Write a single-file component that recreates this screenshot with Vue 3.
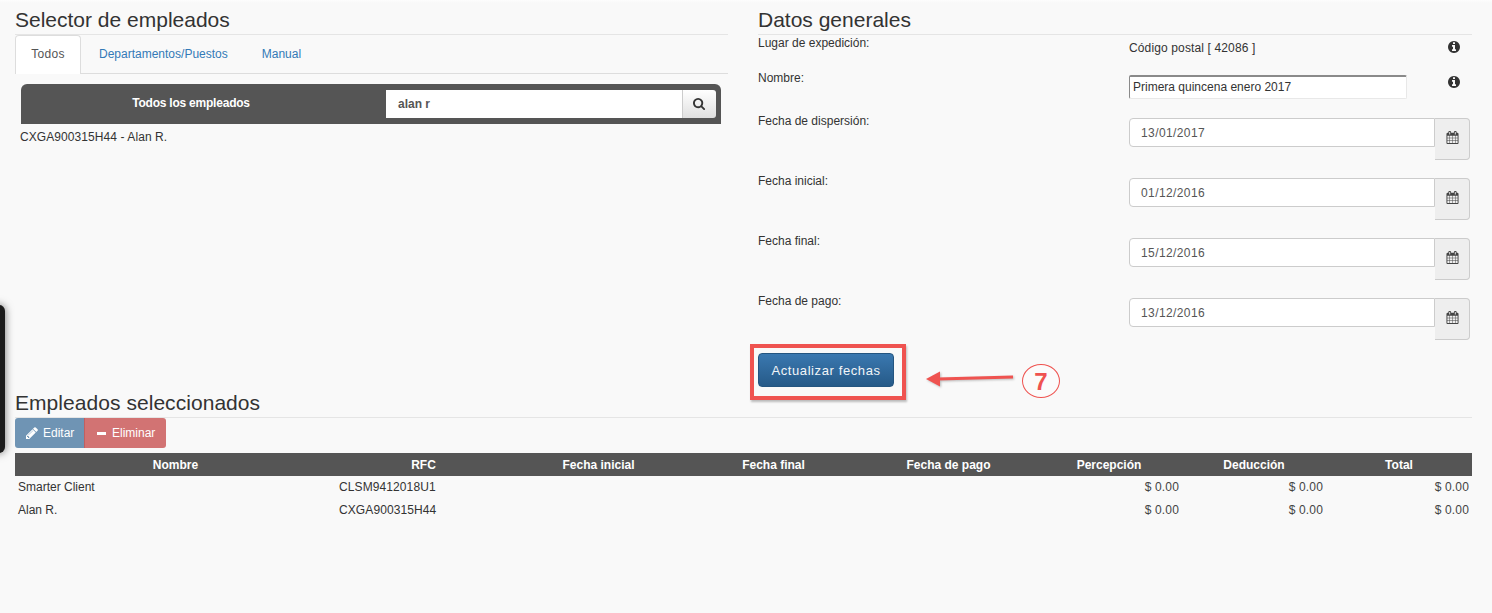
<script setup>
const dates = [
  { label: 'Fecha de dispersión:', value: '13/01/2017' },
  { label: 'Fecha inicial:', value: '01/12/2016' },
  { label: 'Fecha final:', value: '15/12/2016' },
  { label: 'Fecha de pago:', value: '13/12/2016' }
]
const heads = ['Nombre', 'RFC', 'Fecha inicial', 'Fecha final', 'Fecha de pago', 'Percepción', 'Deducción', 'Total']
const widths = [321, 175, 175, 175, 175, 146, 144, 146]
const rows = [
  { name: 'Smarter Client', rfc: 'CLSM9412018U1' },
  { name: 'Alan R.', rfc: 'CXGA900315H44' }
]
const infoPath = 'M1152 1376v-160q0-14-9-23t-23-9h-96v-512q0-14-9-23t-23-9h-320q-14 0-23 9t-9 23v160q0 14 9 23t23 9h96v320h-96q-14 0-23 9t-9 23v160q0 14 9 23t23 9h448q14 0 23-9t9-23zm-128-896v-160q0-14-9-23t-23-9h-192q-14 0-23 9t-9 23v160q0 14 9 23t23 9h192q14 0 23-9t9-23zm640 416q0 209-103 385.5t-279.5 279.5-385.5 103-385.5-103-279.5-279.5-103-385.5 103-385.5 279.5-279.5 385.5-103 385.5 103 279.5 279.5 103 385.5z'
const calPath = 'M192 1664h288v-288h-288v288zm352 0h320v-288h-320v288zm-352-352h288v-320h-288v320zm352 0h320v-320h-320v320zm-352-384h288v-288h-288v288zm736 736h320v-288h-320v288zm-384-736h320v-288h-320v288zm768 736h288v-288h-288v288zm-384-352h320v-320h-320v320zm-352-864v-288q0-13-9.5-22.5t-22.5-9.5h-64q-13 0-22.5 9.5t-9.5 22.5v288q0 13 9.5 22.5t22.5 9.5h64q13 0 22.5-9.5t9.5-22.5zm736 864h288v-320h-288v320zm-384-384h320v-288h-320v288zm384 0h288v-288h-288v288zm32-480v-288q0-13-9.5-22.5t-22.5-9.5h-64q-13 0-22.5 9.5t-9.5 22.5v288q0 13 9.5 22.5t22.5 9.5h64q13 0 22.5-9.5t9.5-22.5zm384-64v1280q0 52-38 90t-90 38h-1408q-52 0-90-38t-38-90v-1280q0-52 38-90t90-38h128v-96q0-66 47-113t113-47h64q66 0 113 47t47 113v96h384v-96q0-66 47-113t113-47h64q66 0 113 47t47 113v96h128q52 0 90 38t38 90z'
</script>

<template>
  <div class="page">
    <div class="side-dock"></div>

    <div class="columns">
      <section class="col left">
        <h2 class="title">Selector de empleados</h2>
        <ul class="tabs">
          <li class="tab active">Todos</li>
          <li class="tab">Departamentos/Puestos</li>
          <li class="tab">Manual</li>
        </ul>
        <div class="search-bar">
          <div class="search-title">Todos los empleados</div>
          <div class="search-group">
            <div class="search-input">alan r</div>
            <div class="search-btn">
              <svg viewBox="0 0 1792 1792" width="13" height="13"><path fill="#333" d="M1152 704q0-185-131.5-316.5t-316.5-131.5-316.5 131.5-131.5 316.5 131.5 316.5 316.5 131.5 316.5-131.5 131.5-316.5zm512 832q0 52-38 90t-90 38q-54 0-90-38l-343-342q-179 124-399 124-143 0-273.5-55.5t-225-150-150-225-55.5-273.5 55.5-273.5 150-225 225-150 273.5-55.5 273.5 55.5 225 150 150 225 55.5 273.5q0 220-124 399l343 343q37 37 37 90z"/></svg>
            </div>
          </div>
        </div>
        <div class="result">CXGA900315H44 - Alan R.</div>
      </section>

      <section class="col right">
        <h2 class="title">Datos generales</h2>
        <div class="row row-place">
          <div class="label">Lugar de expedición:</div>
          <div class="postal">Código postal [ 42086 ]</div>
          <svg class="info info-a" viewBox="0 0 1792 1792" width="14" height="14"><path fill="#333" :d="infoPath"/></svg>
        </div>
        <div class="row row-name">
          <div class="label">Nombre:</div>
          <div class="name-input">Primera quincena enero 2017</div>
          <svg class="info info-b" viewBox="0 0 1792 1792" width="14" height="14"><path fill="#333" :d="infoPath"/></svg>
        </div>
        <div v-for="d in dates" :key="d.label" class="row row-date">
          <div class="label">{{ d.label }}</div>
          <div class="date-group">
            <div class="date-input">{{ d.value }}</div>
            <div class="date-addon">
              <svg viewBox="0 0 1792 1792" width="13" height="13"><path fill="#444" :d="calPath"/></svg>
            </div>
          </div>
        </div>
        <div class="update"><div class="update-btn">Actualizar fechas</div></div>
      </section>
    </div>

    <section class="selected">
      <h2 class="title wide">Empleados seleccionados</h2>
      <div class="actions">
        <div class="btn btn-edit">
          <svg viewBox="0 0 1792 1792" width="14" height="14"><path fill="#fff" d="M491 1536l91-91-235-235-91 91v107h128v128h107zm523-928q0-22-22-22-10 0-17 7l-542 542q-7 7-7 17 0 22 22 22 10 0 17-7l542-542q7-7 7-17zm-54-192l416 416-832 832h-416v-416zm683 96q0 53-37 90l-166 166-416-416 166-165q36-38 90-38 53 0 91 38l235 234q37 39 37 91z"/></svg>
          Editar
        </div>
        <div class="btn btn-del"><span class="minus"></span>Eliminar</div>
      </div>
      <table class="grid">
        <colgroup><col v-for="(w, i) in widths" :key="i" :style="{ width: w + 'px' }" /></colgroup>
        <thead><tr><th v-for="h in heads" :key="h">{{ h }}</th></tr></thead>
        <tbody>
          <tr v-for="r in rows" :key="r.rfc">
            <td>{{ r.name }}</td>
            <td class="rfc">{{ r.rfc }}</td>
            <td></td><td></td><td></td>
            <td class="num">$ 0.00</td>
            <td class="num">$ 0.00</td>
            <td class="num">$ 0.00</td>
          </tr>
        </tbody>
      </table>
    </section>

    <div class="mark-box"></div>
    <svg class="mark-arrow" width="100" height="24" viewBox="0 0 100 24">
      <path d="M93 10 L18 12" stroke="#ef5350" stroke-width="3" fill="none"/>
      <path d="M6 12 L20 4.5 L20 19.5 Z" fill="#ef5350"/>
    </svg>
    <div class="mark-num">7</div>
  </div>
</template>

<style>
html, body { margin: 0; background: #f9f9f9; }
</style>

<style scoped>
.page {
  position: relative;
  height: 613px;
  overflow: hidden;
  box-sizing: border-box;
  padding: 10px 20px 0 15px;
  background: linear-gradient(#fdfdfd 0, #f9f9f9 3px);
  font-family: "Liberation Sans", Arial, sans-serif;
  font-size: 12px;
  color: #333;
}
.side-dock {
  position: absolute;
  left: -10px;
  top: 305px;
  width: 15px;
  height: 148px;
  background: #1c1c1c;
  border-radius: 6px;
  box-shadow: 0 0 8px rgba(0, 0, 0, .55);
}
.columns {
  display: grid;
  grid-template-columns: 713px 714px;
  column-gap: 30px;
  height: 383px;
}
.title {
  margin: 0;
  height: 24px;
  box-sizing: content-box;
  border-bottom: 1px solid #e5e5e5;
  font-size: 21px;
  line-height: 20px;
  font-weight: 400;
  color: #333;
}
.tabs {
  display: flex;
  list-style: none;
  margin: 0;
  padding: 0;
  height: 39px;
  box-sizing: border-box;
  border-bottom: 1px solid #ddd;
}
.tab {
  padding: 0 17px;
  line-height: 38px;
  height: 39px;
  box-sizing: border-box;
  color: #337ab7;
}
.tab.active {
  width: 66px;
  padding: 0;
  text-align: center;
  margin-right: 1px;
  color: #555;
  letter-spacing: .25px;
  background: #fff;
  border: 1px solid #ddd;
  border-bottom: none;
  border-radius: 4px 4px 0 0;
  line-height: 37px;
}
.search-bar {
  display: flex;
  align-items: flex-start;
  margin: 10px 7px 0 6px;
  height: 40px;
  box-sizing: border-box;
  padding: 6px 5px 0 0;
  background: #555;
  border-radius: 6px 6px 0 0;
}
.search-title {
  width: 340px;
  margin-right: 25px;
  text-align: center;
  color: #fff;
  font-weight: 700;
  letter-spacing: -.22px;
  line-height: 26px;
}
.search-group { display: flex; flex: 1; height: 28px; }
.search-input {
  flex: 1;
  background: #fff;
  color: #555;
  font-weight: 700;
  line-height: 29px;
  padding-left: 12px;
}
.search-btn {
  width: 34px;
  display: flex;
  align-items: center;
  justify-content: center;
  background: linear-gradient(#fff, #e0e0e0);
  border-left: 1px solid #ccc;
  box-sizing: border-box;
  border-radius: 0 3px 3px 0;
}
.result { margin: 6px 0 0 5px; line-height: 14px; letter-spacing: .08px; }

.row {
  display: grid;
  grid-template-columns: 371px 1fr;
  position: relative;
}
.label { line-height: 16px; color: #333; }
.row-name .label, .row-date .label { margin-top: 1px; }
.row-place { height: 34px; }
.row-name { height: 43px; }
.row-date { height: 60px; }
.postal { margin-top: 5px; line-height: 16px; letter-spacing: .13px; }
.info { position: absolute; left: 689px; }
.info-a { top: 5px; }
.info-b { top: 6px; }
.name-input {
  margin-top: 6px;
  width: 278px;
  height: 24px;
  box-sizing: border-box;
  background: #fff;
  border: 1px solid #e8e8e8;
  border-top: 2px solid #8a8a8a;
  border-left: 1px solid #8a8a8a;
  border-radius: 2px;
  padding-left: 3px;
  line-height: 20px;
}
.date-group { display: flex; align-items: flex-start; margin-top: 6px; width: 341px; }
.date-input {
  width: 306px;
  height: 29px;
  box-sizing: border-box;
  padding-left: 11px;
  background: #fff;
  border: 1px solid #ccc;
  border-radius: 4px 0 0 4px;
  color: #555;
  line-height: 28px;
  letter-spacing: .4px;
}
.date-addon {
  width: 35px;
  height: 42px;
  box-sizing: border-box;
  padding-bottom: 4px;
  display: flex;
  align-items: center;
  justify-content: center;
  background: #eee;
  border: 1px solid #ccc;
  border-left: none;
  border-radius: 0 4px 4px 0;
}
.update { margin-top: 1px; }
.update-btn {
  width: 136px;
  height: 34px;
  box-sizing: border-box;
  text-align: center;
  line-height: 33px;
  color: #f2f5f8;
  font-size: 13px;
  letter-spacing: .6px;
  background: linear-gradient(#3a78b0, #265a88);
  border: 1px solid #245580;
  border-radius: 4px;
}

.selected { margin-top: 0; }
.title.wide { letter-spacing: .05px; }
.actions { display: flex; height: 30px; }
.btn {
  display: flex;
  align-items: center;
  gap: 4px;
  height: 30px;
  box-sizing: border-box;
  color: #fff;
  font-size: 12px;
}
.btn-edit {
  width: 69px;
  padding-left: 10px;
  background: #6f94b4;
  border-radius: 3px 0 0 3px;
}
.btn-del {
  width: 82px;
  padding-left: 12px;
  gap: 6px;
  background: #d27373;
  border-left: 1px solid #c25f5f;
  border-radius: 0 3px 3px 0;
}
.minus { width: 9px; height: 3px; background: #fff; }
.grid {
  margin-top: 5px;
  width: 1457px;
  table-layout: fixed;
  border-collapse: collapse;
  font-size: 12px;
}
.grid th {
  height: 23px;
  padding: 0;
  background: #555;
  color: #fff;
  font-weight: 700;
  text-align: center;
}
.grid td {
  height: 21px;
  padding: 0 3px 2px;
  color: #333;
}
.grid td.rfc { letter-spacing: .1px; }
.grid td.num { text-align: right; letter-spacing: .15px; color: #444; }

.mark-box {
  position: absolute;
  left: 750px;
  top: 344px;
  width: 156px;
  height: 56px;
  box-sizing: border-box;
  border: 4px solid #ef5350;
  box-shadow: 1px 2px 2px rgba(0, 0, 0, .25);
}
.mark-arrow {
  position: absolute;
  left: 920px;
  top: 367px;
  filter: drop-shadow(1px 1px 1px rgba(0, 0, 0, .25));
}
.mark-num {
  position: absolute;
  left: 1022px;
  top: 364px;
  width: 38px;
  height: 34px;
  box-sizing: border-box;
  border: 1px solid #ef5350;
  border-radius: 50%;
  background: #fbfbfb;
  text-align: center;
  color: #ef5350;
  font-size: 24px;
  font-weight: 700;
  line-height: 34px;
}
</style>
